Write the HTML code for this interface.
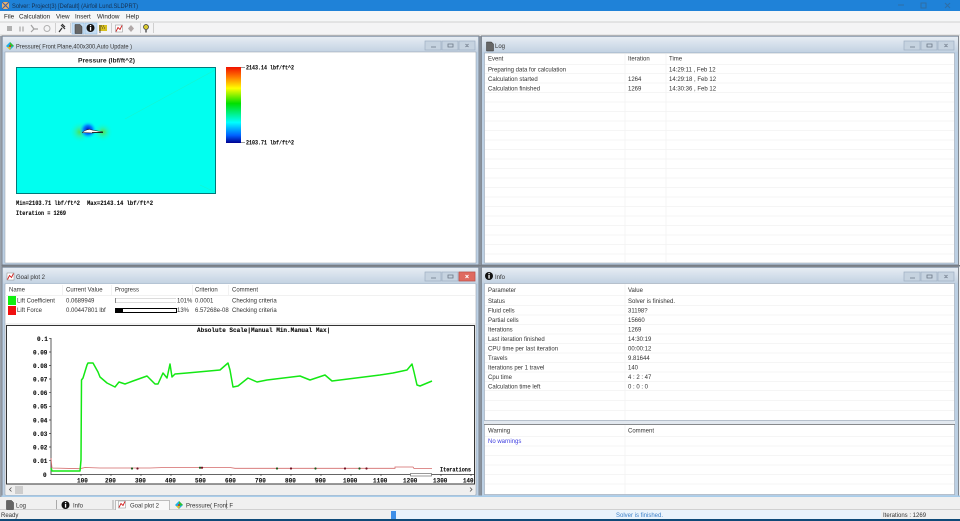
<!DOCTYPE html>
<html><head><meta charset="utf-8"><style>
html,body{margin:0;padding:0;background:#f0f0f0;width:960px;height:521px;overflow:hidden}
svg{display:block;position:absolute;left:0;top:0;filter:blur(.3px)}
text{font-family:"Liberation Sans",sans-serif;font-size:6px;fill:#333}
.m{font-family:"Liberation Mono",monospace;font-weight:bold;font-size:6px;fill:#111;stroke:#111;stroke-width:.12px}
.h{font-family:"Liberation Sans",sans-serif;font-weight:bold;fill:#222}
</style></head><body>
<svg width="960" height="521" viewBox="0 0 960 521">
<defs>
<linearGradient id="t" x1="0" y1="0" x2="0" y2="1"><stop offset="0" stop-color="#e6ecf3"/><stop offset="1" stop-color="#c3d2e2"/></linearGradient>
<linearGradient id="cb" x1="0" y1="0" x2="0" y2="1">
<stop offset="0" stop-color="#f01000"/><stop offset=".12" stop-color="#ff7000"/><stop offset=".28" stop-color="#ffff00"/><stop offset=".48" stop-color="#00e000"/><stop offset=".73" stop-color="#00ffff"/><stop offset=".9" stop-color="#0060ff"/><stop offset="1" stop-color="#000090"/></linearGradient>
<radialGradient id="gh"><stop offset="0" stop-color="#50e050"/><stop offset=".4" stop-color="#30f0a0" stop-opacity=".7"/><stop offset="1" stop-color="#00fff0" stop-opacity="0"/></radialGradient>
<radialGradient id="bh"><stop offset="0" stop-color="#0010c0"/><stop offset=".5" stop-color="#0080ff"/><stop offset="1" stop-color="#00ffff" stop-opacity="0"/></radialGradient>
<g id="btns"><rect x="0" y="0" width="16" height="9" fill="#c6d3e0" stroke="#9fb0c2" stroke-width=".7"/><rect x="17" y="0" width="16" height="9" fill="#c6d3e0" stroke="#9fb0c2" stroke-width=".7"/><rect x="34" y="0" width="16" height="9" fill="#c6d3e0" stroke="#9fb0c2" stroke-width=".7"/><path d="M6 6h5M23 3h5v3h-5zM40.500 3l3 3M43.500 3l-3 3" stroke="#6a7584" stroke-width=".8" fill="none"/></g>
<g id="info"><circle cx="4" cy="4" r="4" fill="#111"/><rect x="3.400" y="1" width="1.300" height="1.200" fill="#fff"/><rect x="3.400" y="3" width="1.300" height="3.600" fill="#fff"/></g>
<g id="doc"><path d="M.5 .5h5l2 2v7h-7z" fill="#666" stroke="#333" stroke-width=".5"/></g>
<g id="plot"><rect x=".5" y=".5" width="7" height="7" fill="#fff" stroke="#888" stroke-width=".5"/><path d="M1 7l2-4 2 2 2-4" stroke="#d02020" stroke-width=".9" fill="none"/></g>
<g id="pres"><path d="M0 4l4-4 4 4-4 4z" fill="#20b0e0"/><path d="M4 0l4 4-4 1z" fill="#30c030"/><path d="M1 5l3 3 1-3z" fill="#e0c020"/><circle cx="4" cy="4" r="1" fill="#d03020"/></g>
</defs>

<!-- window chrome -->
<rect width="960" height="521" fill="#f0f0f0"/>
<rect width="960" height="11" fill="#1f82d8"/>
<rect x="2" y="2" width="7" height="7" fill="#e8b070"/><path d="M2 2l7 7M9 2l-7 7" stroke="#4060a0" stroke-width="1"/>
<text x="12" y="8" textLength="126" lengthAdjust="spacingAndGlyphs" style="font-size:6.400px;fill:#16304f">Solver: Project(3) [Default] (Airfoil Lund.SLDPRT)</text>
<path d="M898 5h6" stroke="#2f6ea5"/><rect x="921" y="3" width="5" height="5" fill="none" stroke="#2f6ea5"/><path d="M945 3l5 5M950 3l-5 5" stroke="#2f6ea5"/>
<rect y="11" width="960" height="11" fill="#f5f6f7"/>
<g>
<text x="4" y="18.500" style="font-size:6.300px;fill:#222">File</text><text x="19" y="18.500" style="font-size:6.300px;fill:#222">Calculation</text><text x="56" y="18.500" style="font-size:6.300px;fill:#222">View</text><text x="75" y="18.500" style="font-size:6.300px;fill:#222">Insert</text><text x="97" y="18.500" style="font-size:6.300px;fill:#222">Window</text><text x="126" y="18.500" style="font-size:6.300px;fill:#222">Help</text>
</g>
<rect y="22" width="960" height="13" fill="#f4f4f5"/>
<path d="M0 22h960" stroke="#c4c4c4" stroke-width=".7"/><path d="M0 35h960" stroke="#d8d8d8"/>
<!-- toolbar -->
<rect x="7" y="26" width="5" height="5" fill="#b0b0b0"/>
<path d="M20 26.500v5M23 26.500v5" stroke="#b5b5b5" stroke-width="1.500"/>
<path d="M31 25l3 4h4M31 32l3-3" stroke="#a0a0a0" stroke-width="1.200" fill="none"/>
<circle cx="47" cy="28.500" r="3" fill="none" stroke="#b0b0b0" stroke-width="1"/>
<path d="M55.500 23v10M70.500 23v10M111.500 23v10M140.500 23v10M153.500 23v10" stroke="#cfcfcf"/>
<path d="M59 32l3-4M61 25l4 4M62 24l3 3" stroke="#333" stroke-width="1.200" fill="none"/>
<rect x="72" y="23" width="12" height="11" fill="#c4ddf3" stroke="#8ab8e0" stroke-width=".5"/>
<rect x="85" y="23" width="12" height="11" fill="#c4ddf3" stroke="#8ab8e0" stroke-width=".5"/>
<use href="#doc" x="74.500" y="24"/>
<use href="#info" x="86.500" y="24"/>
<rect x="99" y="25" width="8" height="6" fill="#d8c020"/><path d="M100 25v8M101 26h1M103 26h1M102 28h1M104 28h1" stroke="#222" stroke-width=".8"/>
<use href="#plot" x="115" y="24.500"/>
<path d="M131 25l3 3.500-3 3.500-3-3.500z" fill="#b0a8a8"/>
<circle cx="146" cy="27" r="2.500" fill="#d8c830" stroke="#333" stroke-width=".7"/><path d="M146 30v2.500" stroke="#333" stroke-width="1.200"/>

<!-- MDI -->
<rect x="0" y="36" width="960" height="462" fill="#f0f0f0"/>

<!-- Pressure panel -->
<rect x="2" y="36" width="477" height="229" fill="#bcd0e4" stroke="#6d727a" stroke-width=".8"/>
<rect x="3" y="37" width="475" height="15" fill="url(#t)"/>
<rect x="5" y="52" width="471" height="211" fill="#fff" stroke="#8f99a5" stroke-width=".5"/>
<use href="#pres" x="6" y="42"/>
<text x="16" y="48.500" textLength="116" lengthAdjust="spacingAndGlyphs">Pressure( Front Plane,400x300,Auto Update )</text>
<use href="#btns" x="425" y="41"/>
<text x="78" y="62.500" class="h" textLength="57" lengthAdjust="spacingAndGlyphs" style="font-size:6.700px">Pressure (lbf/ft^2)</text>
<rect x="16.500" y="67.500" width="199" height="126" fill="#00fff0" stroke="#007a7a"/>
<path d="M125 119L215 70M200 185l15 7" stroke="#20f0c0" stroke-width=".6" opacity=".7"/>
<circle cx="80" cy="132" r="11" fill="url(#gh)"/>
<circle cx="103" cy="132" r="10" fill="url(#gh)"/>
<circle cx="88" cy="130" r="9" fill="url(#bh)"/>
<path d="M82 132.500Q88 128 92 130L103 132L92 133Z" fill="#fff" stroke="#111" stroke-width=".5"/>
<path d="M92 132.500h11" stroke="#111" stroke-width=".8"/>
<rect x="226" y="67" width="15" height="76" fill="url(#cb)"/>
<path d="M241 67.500h4M241 142.500h4" stroke="#333" stroke-width=".6"/>
<text x="246" y="69.500" class="m" textLength="48" lengthAdjust="spacingAndGlyphs" style="font-size:6.500px">2143.14 lbf/ft^2</text>
<text x="246" y="144.500" class="m" textLength="48" lengthAdjust="spacingAndGlyphs" style="font-size:6.500px">2103.71 lbf/ft^2</text>
<text x="16" y="205" class="m" textLength="64" lengthAdjust="spacingAndGlyphs" style="font-size:6.500px">Min=2103.71 lbf/ft^2</text>
<text x="87" y="205" class="m" textLength="66" lengthAdjust="spacingAndGlyphs" style="font-size:6.500px">Max=2143.14 lbf/ft^2</text>
<text x="16" y="215" class="m" textLength="50" lengthAdjust="spacingAndGlyphs" style="font-size:6.500px">Iteration = 1269</text>

<!-- Log panel -->
<rect x="481.500" y="36" width="477" height="229" fill="#bcd0e4" stroke="#6d727a" stroke-width=".8"/>
<rect x="482" y="37" width="476" height="15" fill="url(#t)"/>
<rect x="484.500" y="53" width="470" height="210" fill="#fff" stroke="#8f99a5" stroke-width=".5"/>
<use href="#doc" x="486" y="41.500"/>
<text x="495" y="48">Log</text>
<use href="#btns" x="904" y="41"/>
<path stroke="#f2f2f2" stroke-width=".7" d="M485 64.500h469M485 73.500h469M485 83h469M485 92.500h469M485 102h469M485 111.500h469M485 121h469M485 130.500h469M485 140h469M485 149.500h469M485 159h469M485 168.500h469M485 178h469M485 187.500h469M485 197h469M485 206.500h469M485 216h469M485 225.500h469M485 235h469M485 244.500h469M485 254h469M625 54v208M666 54v208"/>
<g>
<text x="488" y="60.500">Event</text><text x="628" y="60.500">Iteration</text><text x="669" y="60.500">Time</text>
<text x="488" y="71.500">Preparing data for calculation</text><text x="669" y="71.500">14:29:11 , Feb 12</text>
<text x="488" y="81">Calculation started</text><text x="628" y="81">1264</text><text x="669" y="81">14:29:18 , Feb 12</text>
<text x="488" y="90.500">Calculation finished</text><text x="628" y="90.500">1269</text><text x="669" y="90.500">14:30:36 , Feb 12</text>
</g>

<!-- Goal plot panel -->
<rect x="2" y="267" width="477" height="229" fill="#bcd0e4" stroke="#6d727a" stroke-width=".8"/>
<rect x="3" y="268" width="475" height="15.500" fill="url(#t)"/>
<rect x="5" y="284" width="471" height="211" fill="#f2f2f2" stroke="#8f99a5" stroke-width=".5"/>
<rect x="5.500" y="284" width="470" height="39" fill="#fff"/>
<use href="#plot" x="6.500" y="272.500"/>
<text x="16" y="279">Goal plot 2</text>
<use href="#btns" x="425" y="272"/>
<rect x="459" y="272" width="16" height="9" fill="#df6a60" stroke="#c05048" stroke-width=".7"/>
<path d="M465.500 275l3 3M468.500 275l-3 3" stroke="#fff" stroke-width=".9"/>
<path stroke="#ededed" stroke-width=".7" d="M5 295.500h470M62.500 285v10M111.500 285v10M192.500 285v10M228.500 285v10"/>
<g>
<text x="9" y="291.500">Name</text><text x="66" y="291.500">Current Value</text><text x="115" y="291.500">Progress</text><text x="195" y="291.500">Criterion</text><text x="232" y="291.500">Comment</text>
<text x="17" y="302.500">Lift Coefficient</text><text x="66" y="302.500">0.0689949</text><text x="177" y="302.500">101%</text><text x="195" y="302.500">0.0001</text><text x="232" y="302.500">Checking criteria</text>
<text x="17" y="312">Lift Force</text><text x="66" y="312">0.00447801 lbf</text><text x="177" y="312">13%</text><text x="195" y="312">6.57268e-08</text><text x="232" y="312">Checking criteria</text>
</g>
<rect x="8" y="296" width="8" height="9" fill="#10f010"/>
<rect x="8" y="306" width="8" height="9" fill="#f01010"/>
<path d="M115.500 298v5" stroke="#555" stroke-width=".7"/><path d="M116 298.500h60M116 302.500h60" stroke="#dcdcdc"/>
<rect x="115.500" y="308.500" width="61" height="4" fill="#fff" stroke="#000" stroke-width="1"/><rect x="115" y="308" width="8" height="5" fill="#000"/>

<!-- Chart -->
<rect x="6.500" y="325.500" width="468" height="158.500" fill="#fff" stroke="#333" stroke-width="1"/>
<text x="197" y="332" class="m">Absolute Scale|Manual Min.Manual Max|</text>
<path d="M51 338v136.500H475" stroke="#333" stroke-width=".8" fill="none"/>
<path stroke="#333" stroke-width=".7" d="M49 338.300h2M49 352h2M49 365.500h2M49 379h2M49 392.700h2M49 406.300h2M49 420h2M49 433.500h2M49 447h2M49 460.700h2M81 474v2M111 474v2M141 474v2M171 474v2M201 474v2M231 474v2M261 474v2M291 474v2M321 474v2M351 474v2M381 474v2M411 474v2M441 474v2M471 474v2"/>
<g>
<text class="m" x="37" y="341">0.1</text><text class="m" x="33" y="354.500">0.09</text><text class="m" x="33" y="368">0.08</text><text class="m" x="33" y="381.500">0.07</text><text class="m" x="33" y="395">0.06</text><text class="m" x="33" y="408.700">0.05</text><text class="m" x="33" y="422.500">0.04</text><text class="m" x="33" y="436">0.03</text><text class="m" x="33" y="449.500">0.02</text><text class="m" x="33" y="463">0.01</text><text class="m" x="43" y="477">0</text>
<text class="m" x="77" y="482.500">100</text><text class="m" x="105" y="482.500">200</text><text class="m" x="135" y="482.500">300</text><text class="m" x="165" y="482.500">400</text><text class="m" x="195" y="482.500">500</text><text class="m" x="225" y="482.500">600</text><text class="m" x="255" y="482.500">700</text><text class="m" x="285" y="482.500">800</text><text class="m" x="315" y="482.500">900</text><text class="m" x="343" y="482.500">1000</text><text class="m" x="373" y="482.500">1100</text><text class="m" x="403" y="482.500">1200</text><text class="m" x="433" y="482.500">1300</text><text class="m" x="463" y="482.500" textLength="10.500" lengthAdjust="spacingAndGlyphs">140</text>
<text class="m" x="440" y="471.500" textLength="31" lengthAdjust="spacingAndGlyphs">Iterations</text>
</g>
<polyline points="51,458 52,468 80,468.700 85,467.500 100,468 150,468 165,467.500 200,467.500 230,467.500 235,468.300 395,468.300 395,467 413,467 414,468.500 432,468.500" fill="none" stroke="#d46a6a" stroke-width=".8"/>
<polyline points="51,468 52,471 80,471 81,460 81.500,380 83,378 87,365 88,363 93,363 98,372 100,377 107,383 115,387 119,382 125,384 133,381 147,376 155,384 158,384 163,373 167,378 170,364 172,377 175,374 187,373 220,370 228,363 230,370 233,387 238,386 248,378 257,382 267,380 300,376 310,380 325,375 332,381 380,375 393,373 407,370 412,364 414,372 417,385 420,386 432,381" fill="none" stroke="#14e814" stroke-width="1.500" stroke-linejoin="round"/>
<g fill="#1a5a1a"><circle cx="132" cy="468.500" r="1.100"/><circle cx="200" cy="467.700" r="1.100"/><circle cx="277" cy="468.500" r="1.100"/><circle cx="315.500" cy="468.500" r="1.100"/><circle cx="359.500" cy="468.500" r="1.100"/></g>
<g fill="#701020"><circle cx="137.500" cy="468.500" r="1.100"/><circle cx="202" cy="467.700" r="1.100"/><circle cx="291" cy="468.500" r="1.100"/><circle cx="345" cy="468.500" r="1.100"/><circle cx="366.500" cy="468.500" r="1.100"/></g>
<rect x="410.500" y="473.500" width="21" height="2.500" fill="#fff" stroke="#555" stroke-width=".6"/>
<!-- hscroll -->
<rect x="6" y="485" width="469" height="10" fill="#efefef"/>
<rect x="15" y="486" width="8" height="8" fill="#cdcdcd"/>
<path d="M11.500 487.500l-2 2 2 2M470 487.500l2 2-2 2" stroke="#555" stroke-width=".8" fill="none"/>

<!-- Info panel -->
<rect x="481.500" y="267" width="477" height="229" fill="#bcd0e4" stroke="#6d727a" stroke-width=".8"/>
<rect x="482" y="268" width="476" height="15" fill="url(#t)"/>
<rect x="484.500" y="283.500" width="470" height="137" fill="#fff" stroke="#8f99a5" stroke-width=".5"/>
<rect x="484.500" y="424.500" width="470" height="70" fill="#fff" stroke="#8f99a5" stroke-width=".5"/>
<path d="M484 424.500h471" stroke="#777" stroke-width=".7"/>
<rect x="484" y="421" width="471" height="3" fill="#e2e8ef"/>
<use href="#info" x="485" y="272"/>
<text x="495" y="279">Info</text>
<use href="#btns" x="904" y="272"/>
<path stroke="#f2f2f2" stroke-width=".7" d="M485 295.500h469M485 305.500h469M485 315h469M485 324.500h469M485 334h469M485 343.500h469M485 353h469M485 362.500h469M485 372h469M485 381.500h469M485 390.500h469M485 400.500h469M485 410.500h469M625 284v136M485 436.500h469M485 446h469M485 455.500h469M485 465h469M485 474.500h469M485 484h469M625 425v69"/>
<g>
<text x="488" y="292">Parameter</text><text x="628" y="292">Value</text>
<text x="488" y="303">Status</text><text x="628" y="303">Solver is finished.</text>
<text x="488" y="312.500">Fluid cells</text><text x="628" y="312.500">31198?</text>
<text x="488" y="322">Partial cells</text><text x="628" y="322">15660</text>
<text x="488" y="331.500">Iterations</text><text x="628" y="331.500">1269</text>
<text x="488" y="341">Last iteration finished</text><text x="628" y="341">14:30:19</text>
<text x="488" y="350.500">CPU time per last iteration</text><text x="628" y="350.500">00:00:12</text>
<text x="488" y="360">Travels</text><text x="628" y="360">9.81644</text>
<text x="488" y="369.500">Iterations per 1 travel</text><text x="628" y="369.500">140</text>
<text x="488" y="379">Cpu time</text><text x="628" y="379">4 : 2 : 47</text>
<text x="488" y="388.500">Calculation time left</text><text x="628" y="388.500">0 : 0 : 0</text>
<text x="488" y="432.500">Warning</text><text x="628" y="432.500">Comment</text>
<text x="488" y="443" style="fill:#4040e0">No warnings</text>
</g>

<!-- splitters between panels -->
<rect x="479" y="36" width="2.500" height="461" fill="#8a939e"/>
<rect x="0" y="265" width="960" height="1.500" fill="#777d85"/>
<rect x="0" y="495.500" width="960" height="1.500" fill="#a9cdea"/>
<rect x="0" y="36" width="1.500" height="461" fill="#9aa3ad"/>

<!-- tabs -->
<rect x="0" y="497" width="960" height="13" fill="#f0f0f0"/>
<path d="M0 509.500h960" stroke="#d0d0d0"/>
<rect x="115.500" y="500.500" width="54" height="10" fill="#f8f8f8" stroke="#999" stroke-width=".6"/>
<path d="M56.500 500v9M113 500v9M226.500 500v9" stroke="#aaa"/>
<use href="#doc" x="6" y="500"/>
<text x="16" y="507.500">Log</text>
<use href="#info" x="61.500" y="501"/>
<text x="73" y="507.500">Info</text>
<use href="#plot" x="118" y="500.500"/>
<text x="130" y="507.500">Goal plot 2</text>
<use href="#pres" x="175" y="501"/>
<text x="186" y="507.500">Pressure( Front F</text>

<!-- status -->
<rect y="510" width="960" height="9" fill="#f0f0f0"/>
<rect x="392" y="510" width="489" height="9" fill="#eaf3fb"/>
<rect x="391" y="511" width="5" height="8" fill="#3d8fe8"/>
<text x="1" y="517">Ready</text>
<text x="616" y="517" style="fill:#3a7fc8">Solver is finished.</text>
<text x="883" y="517">Iterations : 1269</text>
<rect y="519" width="960" height="2" fill="#0f4a78"/>
</svg>
</body></html>
